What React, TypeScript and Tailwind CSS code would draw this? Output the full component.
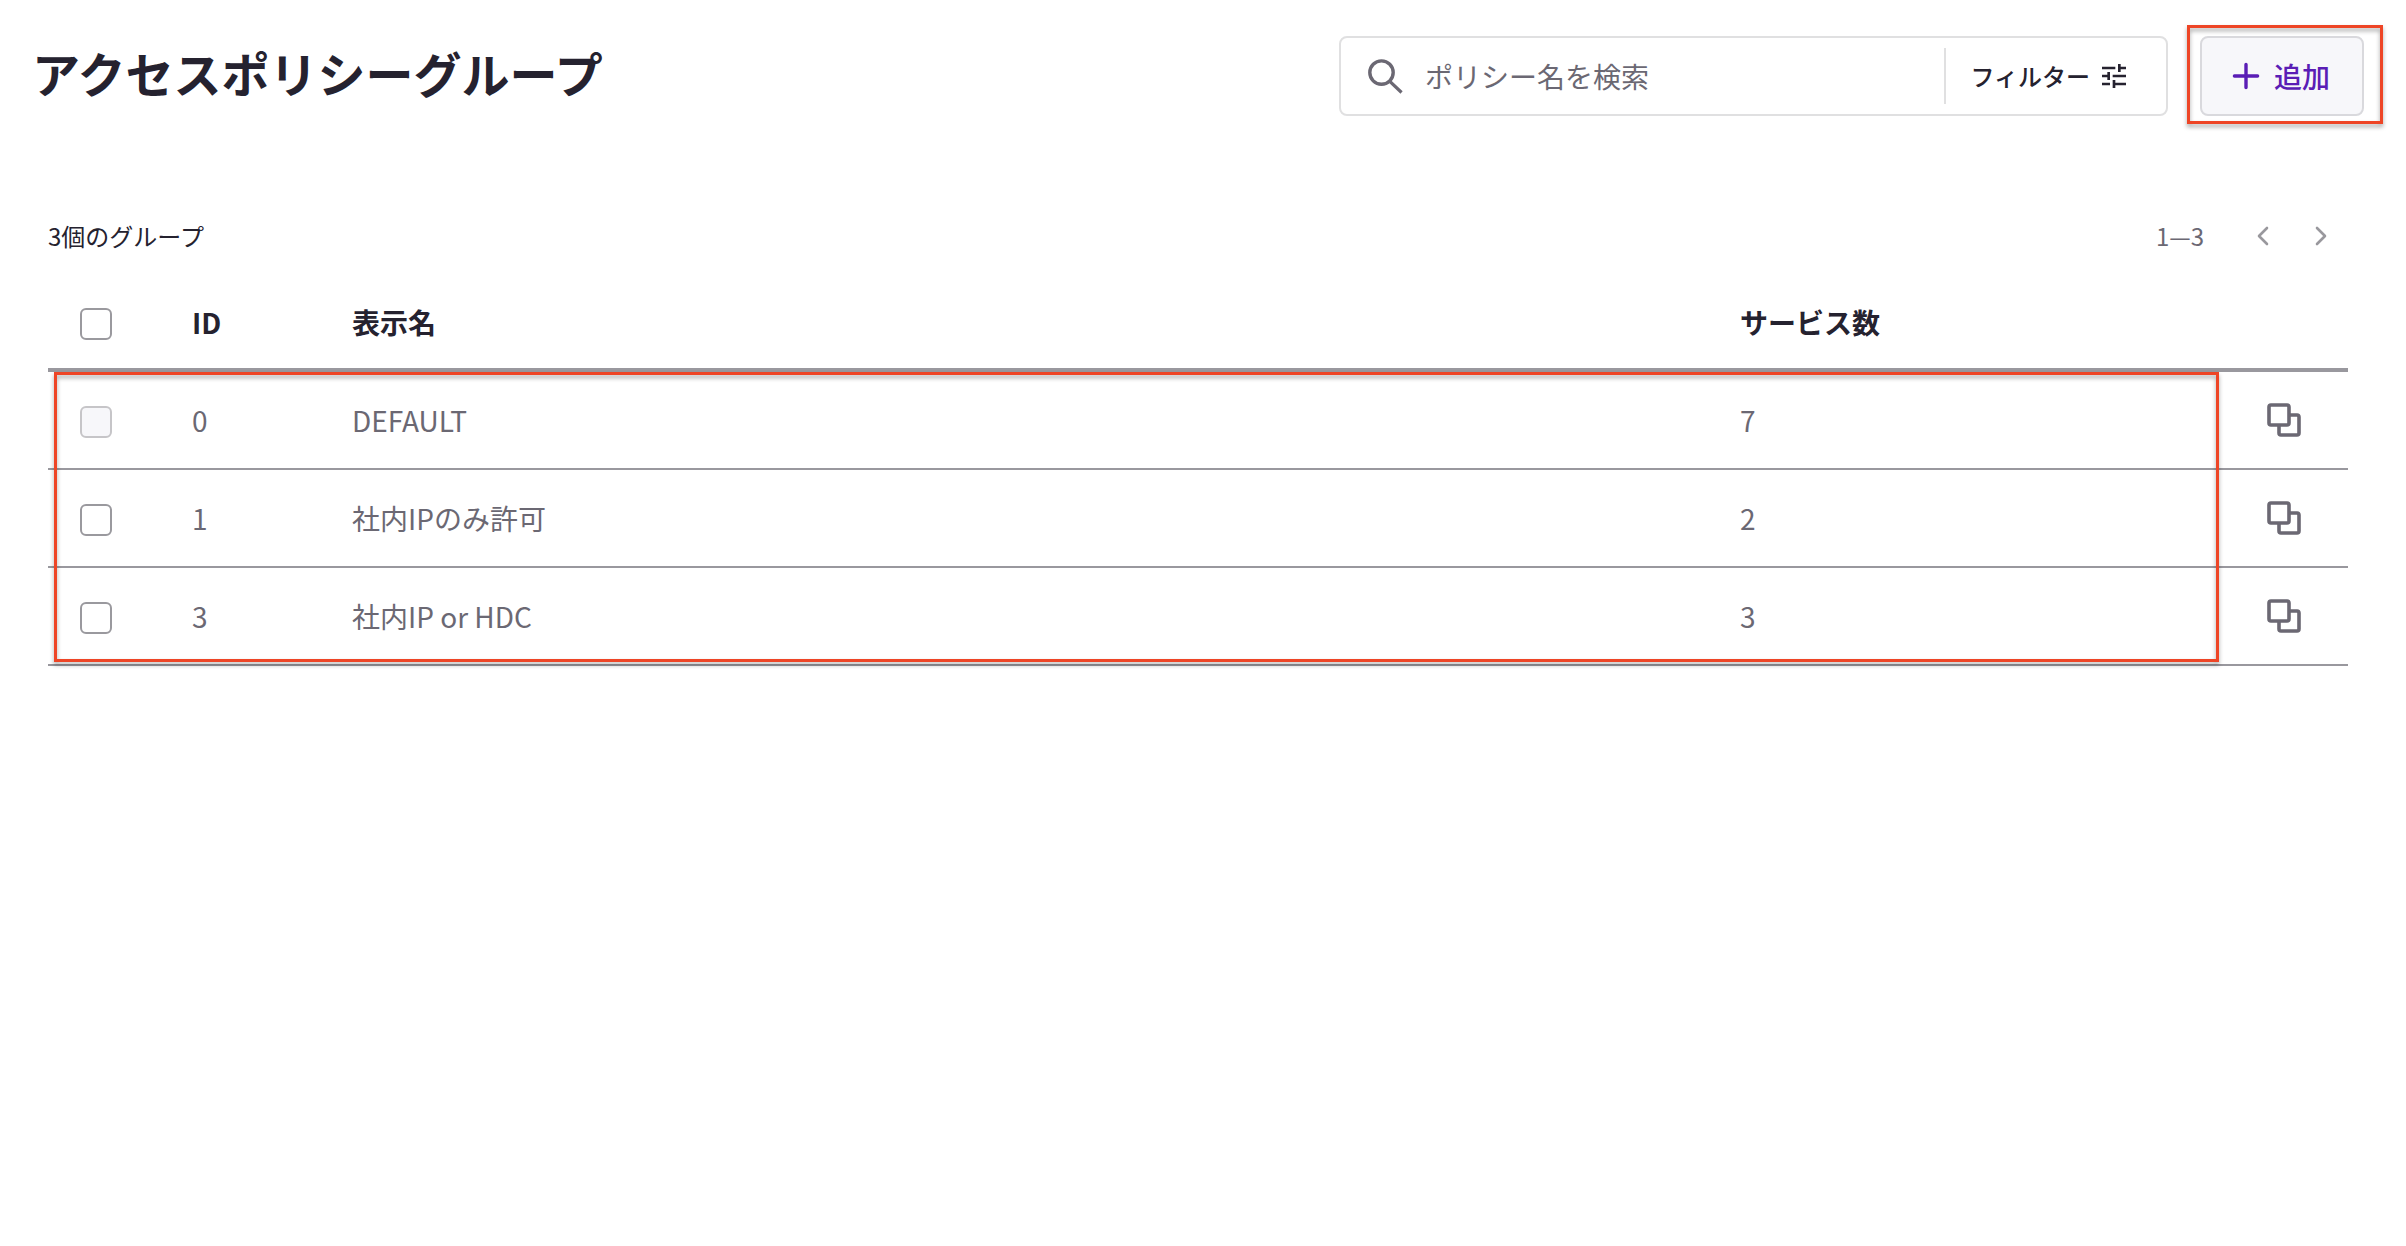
import React, { useState } from "react";

interface PolicyGroup {
  id: number;
  name: string;
  services: number;
  locked?: boolean;
}

const groups: PolicyGroup[] = [
  { id: 0, name: "DEFAULT", services: 7, locked: true },
  { id: 1, name: "社内IPのみ許可", services: 2 },
  { id: 3, name: "社内IP or HDC", services: 3 },
];

const SearchIcon = () => (
  <svg className="h-10 w-10 shrink-0" viewBox="0 0 40 40" fill="none" stroke="currentColor" strokeWidth="3.4" aria-hidden="true">
    <circle cx="16.5" cy="16.6" r="11.7" />
    <path d="M24.6 25.2 35.4 35.4" strokeLinecap="square" strokeWidth="3.2" />
  </svg>
);

const TuneIcon = () => (
  <svg className="h-8 w-8 shrink-0" viewBox="0 0 24 24" fill="currentColor" aria-hidden="true">
    <path d="M3 17v2h6v-2H3zM3 5v2h10V5H3zm10 16v-2h8v-2h-8v-2h-2v6h2zM7 9v2H3v2h4v2h2V9H7zm14 4v-2H11v2h10zm-6-4h2V7h4V5h-4V3h-2v6z" />
  </svg>
);

const PlusIcon = () => (
  <svg className="h-7 w-7 shrink-0" viewBox="0 0 28 28" fill="none" stroke="currentColor" strokeWidth="3.4" strokeLinecap="round" aria-hidden="true">
    <path d="M14 2.4v23.2M2.4 14h23.2" />
  </svg>
);

const Chevron = ({ d }: { d: string }) => (
  <svg className="h-6 w-6" viewBox="0 0 24 24" fill="none" stroke="currentColor" strokeWidth="2.6" strokeLinecap="round" strokeLinejoin="round" aria-hidden="true">
    <path d={d} />
  </svg>
);

const DuplicateIcon = () => (
  <svg className="h-10 w-10" viewBox="0 0 40 40" fill="none" stroke="currentColor" strokeWidth="3.6" strokeLinejoin="round" aria-hidden="true">
    <rect x="5" y="5" width="20" height="20" rx="2" />
    <path d="M25 15h8a2 2 0 0 1 2 2v16a2 2 0 0 1-2 2H17a2 2 0 0 1-2-2V25" />
  </svg>
);

interface TickBoxProps {
  label: string;
  checked: boolean;
  disabled?: boolean;
  onChange: () => void;
}

const TickBox: React.FC<TickBoxProps> = ({ label, checked, disabled, onChange }) => (
  <input
    type="checkbox"
    aria-label={label}
    checked={checked}
    disabled={disabled}
    onChange={onChange}
    className="block h-8 w-8 appearance-none rounded-md border-2 border-[#9a999e] bg-white checked:bg-[#5a1db5] disabled:border-[#c6c5c8] disabled:bg-[#f7f7fa]"
  />
);

// Red callout frame laid over a control or a block of rows
const Callout = ({ className }: { className: string }) => (
  <div
    className={`pointer-events-none absolute border-3 border-[#ee4526] drop-shadow-[0_3px_2px_rgba(0,0,0,0.35)] ${className}`}
  />
);

const App: React.FC = () => {
  const [selected, setSelected] = useState<number[]>([]);
  const selectable = groups.filter((g) => !g.locked).map((g) => g.id);
  const allSelected = selected.length === selectable.length;

  const toggle = (id: number) =>
    setSelected((prev) =>
      prev.includes(id) ? prev.filter((x) => x !== id) : [...prev, id],
    );

  return (
    <div
      lang="ja"
      className="min-h-screen bg-white font-['Noto_Sans_CJK_JP',sans-serif] text-[28px] leading-10 text-[#6b6873]"
    >
      <header className="flex items-center gap-8 pt-9 pr-[42px] pl-8">
        <h1 className="flex-1 pb-2 text-5xl leading-16 font-bold text-[#25222f]">
          アクセスポリシーグループ
        </h1>
        <div className="flex h-20 w-[829px] items-center rounded-lg border-2 border-[#e0e0e1] pl-6">
          <SearchIcon />
          <input
            type="search"
            aria-label="ポリシー名を検索"
            placeholder="ポリシー名を検索"
            className="ml-5 min-w-0 flex-1 bg-transparent outline-none placeholder:text-[#6b6873] placeholder:opacity-100"
          />
          <button
            type="button"
            className="flex h-14 items-center gap-2 border-l-2 border-[#e0e0e1] pr-9 pl-6 text-2xl font-medium text-[#25222f]"
          >
            フィルター
            <TuneIcon />
          </button>
        </div>
        <div className="relative">
          <button
            type="button"
            className="flex h-20 w-[164px] items-center justify-center gap-[14px] rounded-lg border-2 border-[#d9d9dd] bg-[#f7f7fa] pr-0.5 font-medium text-[#5a1db5]"
          >
            <PlusIcon />
            追加
          </button>
          <Callout className="-top-[11px] -right-[19px] -bottom-[8px] -left-[13px]" />
        </div>
      </header>

      <main className="pt-24 pr-[58px] pl-12">
        <div className="flex h-12 items-center text-2xl">
          <p className="flex-1 text-[#25222f]">3個のグループ</p>
          <span className="mr-8">1—3</span>
          <nav aria-label="ページ" className="flex gap-1 text-[#99989d]">
            <button type="button" aria-label="前へ" className="flex h-12 w-[54px] items-center justify-center">
              <Chevron d="M16 4 8 12l8 8" />
            </button>
            <button type="button" aria-label="次へ" className="flex h-12 w-[54px] items-center justify-center">
              <Chevron d="m8 4 8 8-8 8" />
            </button>
          </nav>
        </div>

        <div className="relative mt-5">
          <table className="w-full table-fixed border-separate border-spacing-0 text-left">
            <colgroup>
              <col className="w-28" />
              <col className="w-40" />
              <col />
              <col className="w-[512px]" />
              <col className="w-32" />
            </colgroup>
            <thead className="text-[#25222f]">
              <tr className="h-[92px] [&>*]:border-b-4 [&>*]:border-[#99989e] [&>*]:pl-8">
                <td>
                  <TickBox
                    label="すべて選択"
                    checked={allSelected}
                    onChange={() => setSelected(allSelected ? [] : selectable)}
                  />
                </td>
                <th scope="col" className="pb-1">ID</th>
                <th scope="col" className="pb-1">表示名</th>
                <th scope="col" className="pb-1">サービス数</th>
                <td></td>
              </tr>
            </thead>
            <tbody>
              {groups.map((group) => (
                <tr
                  key={group.id}
                  className="h-[98px] [&>td]:border-b-2 [&>td]:border-[#99989e]"
                >
                  <td className="pt-1 pl-8">
                    <TickBox
                      label={`${group.name}を選択`}
                      checked={selected.includes(group.id)}
                      disabled={group.locked}
                      onChange={() => toggle(group.id)}
                    />
                  </td>
                  <td className="pl-8">{group.id}</td>
                  <td className="pl-8">{group.name}</td>
                  <td className="pl-8">{group.services}</td>
                  <td>
                    <button type="button" aria-label="複製" className="mx-auto block">
                      <DuplicateIcon />
                    </button>
                  </td>
                </tr>
              ))}
            </tbody>
          </table>
          <Callout className="top-[92px] right-[129px] bottom-1 left-[6px]" />
        </div>
      </main>
    </div>
  );
};

export default App;
